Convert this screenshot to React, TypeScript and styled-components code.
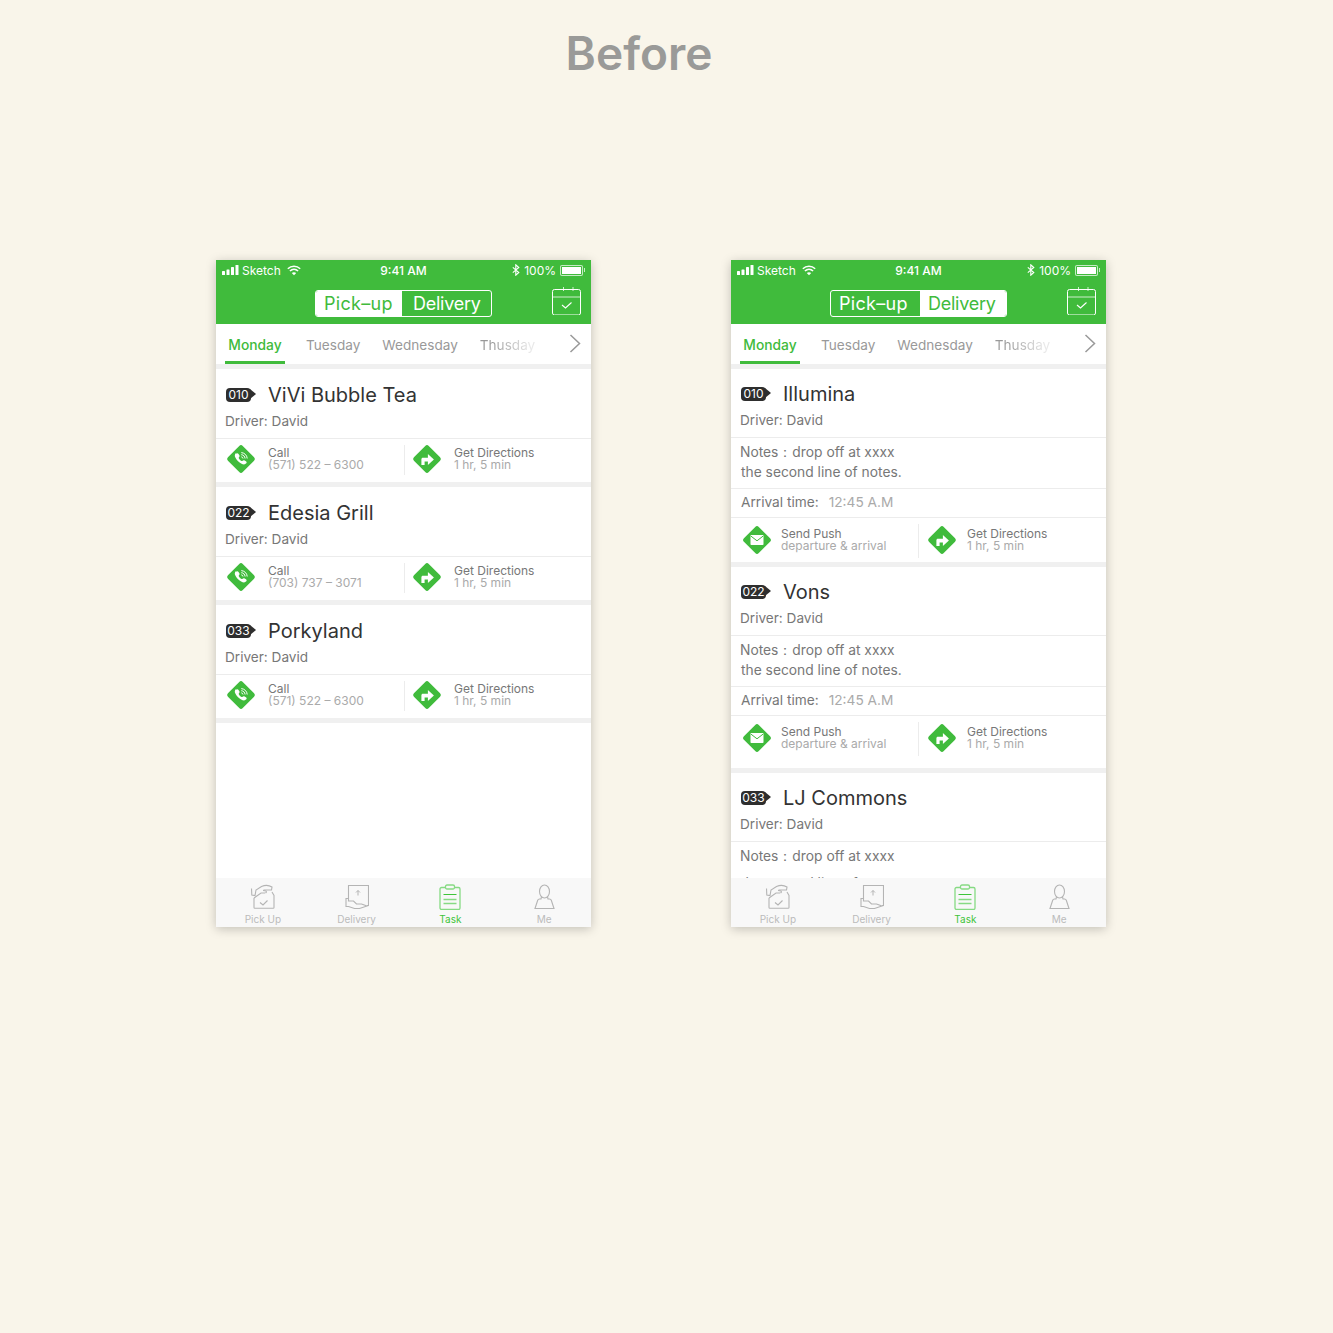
import React from 'react';
import styled, {createGlobalStyle} from 'styled-components';

type TaskType = {
    code: string
    name: string
    notes?: boolean
    cut?: boolean
    tall?: boolean
    phone?: string
}

const leftTasks: TaskType[] = [
    {code: '010', name: 'ViVi Bubble Tea', phone: '(571) 522 – 6300'},
    {code: '022', name: 'Edesia Grill', phone: '(703) 737 – 3071'},
    {code: '033', name: 'Porkyland', phone: '(571) 522 – 6300'},
]

const rightTasks: TaskType[] = [
    {code: '010', name: 'Illumina', notes: true},
    {code: '022', name: 'Vons', notes: true, tall: true},
    {code: '033', name: 'LJ Commons', notes: true, cut: true},
]

const GREEN = '#40bb3c'

const Diamond = ({children}: { children: React.ReactNode }) => (
    <svg width="30" height="30" viewBox="0 0 30 30">
        <rect x="4.500" y="4.500" width="21" height="21" rx="2.500" fill={GREEN} transform="rotate(45 15 15)"/>
        {children}
    </svg>
)

const CallIcon = () => (
    <Diamond>
        <path d="M10.200 9.800c.9-.9 1.700-.9 2.300.1l1 1.700c.3.600.1 1.100-.5 1.600-.4.300-.4.700-.1 1.200.7 1.100 1.400 1.800 2.500 2.500.5.300.9.300 1.200-.1.500-.6 1-.8 1.600-.5l1.700 1c1 .6 1 1.400.1 2.300-1.100 1.200-2.900 1-4.900-.1-2.600-1.500-4.300-3.300-5.600-5.700-1.100-1.900-1-3.400.7-5z" fill="#fff"/>
        <path d="M15.300 8.600c3.200.2 5.700 2.700 5.900 5.900M15.300 10.700c2 .1 3.600 1.700 3.800 3.800M15.300 12.800c.9.100 1.600.8 1.700 1.700" fill="none" stroke="#fff" strokeWidth="1"/>
    </Diamond>
)

const DirectionIcon = () => (
    <Diamond>
        <path d="M9.400 21v-5.800c0-.9.600-1.500 1.500-1.500h5v-3.700l6 5.500-6 5.500v-3.600h-3.300V21z" fill="#fff"/>
    </Diamond>
)

const MailIcon = () => (
    <Diamond>
        <rect x="8.500" y="10" width="13" height="10" rx=".8" fill="#fff"/>
        <path d="M8.800 11L15 15.800 21.200 11" fill="none" stroke={GREEN} strokeWidth="1"/>
    </Diamond>
)

const SignalIcon = () => (
    <svg width="17" height="10" viewBox="0 0 17 10">
        <rect x="0" y="6" width="3" height="4" rx=".6" fill="#fff"/>
        <rect x="4.500" y="4.500" width="3" height="5.500" rx=".6" fill="#fff"/>
        <rect x="9" y="2" width="3" height="8" rx=".6" fill="#fff"/>
        <rect x="13.500" y="0" width="3" height="10" rx=".6" fill="#fff"/>
    </svg>
)

const WifiIcon = () => (
    <svg width="14" height="11" viewBox="0 0 14 11">
        <path d="M.8 3.800C4.300.4 9.700.4 13.200 3.800M2.900 6C5.300 3.800 8.700 3.800 11.100 6" fill="none" stroke="#fff" strokeWidth="1.500"/>
        <path d="M4.800 7.900c1.300-1 3.100-1 4.400 0L7 10.300z" fill="#fff"/>
    </svg>
)

const BluetoothIcon = () => (
    <svg width="8" height="12" viewBox="0 0 8 12">
        <path d="M.8 3.300l6 5.200L3.800 11.200V.8l3 2.700-6 5.200" fill="none" stroke="#fff" strokeWidth="1.100"/>
    </svg>
)

const CalendarIcon = () => (
    <svg width="29" height="28" viewBox="0 0 29 28">
        <rect x=".5" y="2.500" width="28" height="25.500" rx="2" fill="none" stroke="#fff"/>
        <path d="M.5 10h28" stroke="#fff" opacity=".75"/>
        <path d="M11.500 0v4M21 0v4" stroke="#fff" opacity=".75"/>
        <path d="M10 18l3.500 3 6-5.500" fill="none" stroke="#fff" strokeWidth="1.100"/>
    </svg>
)

const ChevronIcon = () => (
    <svg width="12" height="19" viewBox="0 0 12 19">
        <path d="M1.500 1l9 8.500-9 8.500" fill="none" stroke="#999" strokeWidth="1.500"/>
    </svg>
)

const PickUpIcon = () => (
    <svg width="26" height="26" viewBox="0 0 26 26" fill="none" stroke="#b4b4b4" strokeWidth="1.100">
        <path d="M4 14v9.500c0 .5.300.8.800.8h18.400c.5 0 .8-.3.800-.8V11.500l-2-3.500"/>
        <path d="M4 14l7-5h4"/>
        <path d="M10 18.500l3 2.500 4.500-4.500"/>
        <path d="M1.500 4.500L1.800 11l3.200.5 1-5.500 5.500-3.500C15 1 19 1.200 22 3l-.5 3h-8"/>
        <path d="M13 6.500c3 0 4.500 1 2.500 2.500"/>
    </svg>
)

const DeliveryIcon = () => (
    <svg width="24" height="26" viewBox="0 0 24 26" fill="none" stroke="#b4b4b4" strokeWidth="1.100">
        <path d="M3.500 14.500V1.500h20v20h-1.500"/>
        <path d="M13 11.500V6.500M11 8.500l2-2 2 2" strokeWidth="1"/>
        <path d="M1 14.500v8h2.500l6 2h5l7.500-2.500-5.500-2h-5l-3-3H3.500v-2.500z"/>
    </svg>
)

const TaskIcon = () => (
    <svg width="22" height="26" viewBox="0 0 22 26" fill="none" stroke="#86da83" strokeWidth="1.300">
        <rect x="1" y="3.500" width="20" height="22" rx="1.500"/>
        <rect x="6.500" y="1" width="9" height="4" rx="1.500" fill="#f8f8f8"/>
        <path d="M4.500 10.500h13" stroke="#3fc43a" strokeWidth="1"/>
        <path d="M4.500 15.500h13M4.500 19.500h13" strokeWidth="1.400"/>
    </svg>
)

const MeIcon = () => (
    <svg width="21" height="26" viewBox="0 0 21 26" fill="none" stroke="#b4b4b4" strokeWidth="1.100">
        <ellipse cx="10.500" cy="7.500" rx="5" ry="6.500"/>
        <path d="M7.500 13l-.5 2H5.500c-1 0-1.500.5-1.800 1.300L1 24.500h19l-2.700-8.200c-.3-.8-.8-1.300-1.800-1.300H14l-.5-2"/>
    </svg>
)

const Action = ({icon, title, sub, second, dense}: {
    icon: React.ReactNode, title: string, sub: string, second?: boolean, dense?: boolean
}) => (
    <ActionCell $second={second} $dense={dense}>
        <IconSlot $dense={dense}>{icon}</IconSlot>
        <ActionText>
            <ActionTitle>{title}</ActionTitle>
            <ActionSub>{sub}</ActionSub>
        </ActionText>
    </ActionCell>
)

const Card = ({task, dense}: { task: TaskType, dense?: boolean }) => (
    <>
        <CardHead $dense={dense}>
            <TitleRow>
                <Tag>{task.code}</Tag>
                <Title>{task.name}</Title>
            </TitleRow>
            <Driver>Driver: David</Driver>
        </CardHead>
        {task.notes && (
            <Notes>
                <NoteLine>Notes：drop off at xxxx</NoteLine>
                <NoteLine $shift $cut={task.cut}>the second line of notes.</NoteLine>
            </Notes>
        )}
        {task.notes && !task.cut && (
            <Arrival>Arrival time:<ArrivalValue>12:45 A.M</ArrivalValue></Arrival>
        )}
        {!task.cut && (
            <Actions $tall={task.tall} $dense={dense}>
                {task.phone
                    ? <Action icon={<CallIcon/>} title="Call" sub={task.phone}/>
                    : <Action dense icon={<MailIcon/>} title="Send Push" sub="departure & arrival"/>}
                <Action second dense={dense} icon={<DirectionIcon/>} title="Get Directions" sub="1 hr, 5 min"/>
            </Actions>
        )}
        {!task.cut && <Gap/>}
    </>
)

const Phone = ({tasks, delivery, dense}: { tasks: TaskType[], delivery?: boolean, dense?: boolean }) => (
    <Screen>
        <Header>
            <StatusBar>
                <StatusSide>
                    <SignalIcon/>
                    <span>Sketch</span>
                    <WifiGap><WifiIcon/></WifiGap>
                </StatusSide>
                <StatusTime>9:41 AM</StatusTime>
                <StatusSide $right>
                    <BluetoothIcon/>
                    <span>100%</span>
                    <Battery/>
                </StatusSide>
            </StatusBar>
            <NavBar>
                <Segment>
                    <SegmentItem $active={!delivery} $width={delivery ? 89 : 86} $pad={8} $spacing={.3}>Pick–up</SegmentItem>
                    <SegmentItem $active={delivery} $width={delivery ? 86 : 89} $pad={delivery ? 8 : 11} $spacing={-.25}>Delivery</SegmentItem>
                </Segment>
                <CalendarSlot><CalendarIcon/></CalendarSlot>
            </NavBar>
        </Header>
        <Days>
            <Day $active>Monday</Day>
            <Day>Tuesday</Day>
            <Day>Wednesday</Day>
            <Day $fade>Thusday</Day>
            <ChevronSlot><ChevronIcon/></ChevronSlot>
        </Days>
        <Gap/>
        <Content>
            {tasks.map(t => <Card key={t.code} task={t} dense={dense}/>)}
        </Content>
        <TabBar>
            <TabItem><TabIcon><PickUpIcon/></TabIcon>Pick Up</TabItem>
            <TabItem><TabIcon><DeliveryIcon/></TabIcon>Delivery</TabItem>
            <TabItem $active><TabIcon><TaskIcon/></TabIcon>Task</TabItem>
            <TabItem><TabIcon><MeIcon/></TabIcon>Me</TabItem>
        </TabBar>
    </Screen>
)

export default function App() {
    return (
        <Page>
            <GlobalStyle/>
            <Heading>Before</Heading>
            <Phones>
                <Phone tasks={leftTasks}/>
                <Phone tasks={rightTasks} delivery dense/>
            </Phones>
        </Page>
    )
}

const GlobalStyle = createGlobalStyle`
  html, body {
    margin: 0;
    padding: 0;
    background: #f9f5ea;
  }

  * {
    box-sizing: border-box;
  }
`

const Page = styled.div`
  width: 1333px;
  height: 1333px;
  background: #f9f5ea;
  font-family: Inter, "Noto Sans", sans-serif;
  overflow: hidden;
`

const Heading = styled.h1`
  margin: 0;
  padding-top: 21px;
  height: 260px;
  padding-right: 55px;
  text-align: center;
  font-size: 46px;
  line-height: 64px;
  font-weight: 600;
  color: #9a9a98;
`

const Phones = styled.div`
  display: flex;
  gap: 140px;
  padding-left: 216px;
`

const Screen = styled.div`
  width: 375px;
  height: 667px;
  display: flex;
  flex-direction: column;
  background: #fff;
  box-shadow: 0 2px 10px rgba(0, 0, 0, .22);
`

const Header = styled.div`
  height: 64px;
  background: ${GREEN};
  color: #fff;
`

const StatusBar = styled.div`
  height: 20px;
  padding: 0 6px;
  display: grid;
  grid-template-columns: 1fr auto 1fr;
  align-items: center;
  font-size: 12px;
`

const StatusSide = styled.div<{ $right?: boolean }>`
  display: flex;
  align-items: center;
  gap: ${props => props.$right ? '4px' : '3px'};
  justify-content: ${props => props.$right ? 'flex-end' : 'flex-start'};
  padding-right: ${props => props.$right ? '2px' : '0'};
`

const WifiGap = styled.span`
  display: flex;
  margin-left: 3px;
`

const StatusTime = styled.div`
  font-weight: 500;
`

const Battery = styled.span`
  position: relative;
  width: 23px;
  height: 11px;
  border: 1px solid rgba(255, 255, 255, .7);
  border-radius: 2px;
  padding: 1px;
  background: #fff content-box;

  &::after {
    content: '';
    position: absolute;
    right: -3px;
    top: 2px;
    width: 1px;
    height: 4px;
    background: rgba(255, 255, 255, .7);
  }
`

const NavBar = styled.div`
  height: 44px;
  display: flex;
  align-items: center;
  padding: 3px 10px 0 99px;
  justify-content: space-between;
`

const Segment = styled.div`
  width: 177px;
  height: 27px;
  display: flex;
  border: 1px solid #fff;
  border-radius: 3px;
  overflow: hidden;
`

const SegmentItem = styled.div<{ $active?: boolean, $width: number, $pad: number, $spacing: number }>`
  width: ${props => props.$width}px;
  padding-left: ${props => props.$pad}px;
  font-size: 18px;
  line-height: 25px;
  letter-spacing: ${props => props.$spacing}px;
  white-space: nowrap;
  color: ${props => props.$active ? GREEN : '#fff'};
  background: ${props => props.$active ? '#fff' : 'transparent'};
`

const CalendarSlot = styled.div`
  display: flex;
  margin-top: -5px;
`

const Days = styled.div`
  height: 40px;
  display: flex;
  padding-left: 9px;
  position: relative;
`

const Day = styled.div<{ $active?: boolean, $fade?: boolean }>`
  width: ${props => props.$active ? '60px' : 'auto'};
  margin-right: ${props => props.$active ? '21px' : '22px'};
  text-align: center;
  font-size: ${props => props.$active ? '13.8px' : '13.6px'};
  line-height: 42px;
  color: ${props => props.$active ? GREEN : '#999'};
  font-weight: ${props => props.$active ? 500 : 400};
  border-bottom: 3px solid ${props => props.$active ? GREEN : 'transparent'};
  ${props => props.$fade && `
    background: linear-gradient(90deg, #999 20%, #e8e8e8 90%);
    -webkit-background-clip: text;
    background-clip: text;
    color: transparent;
  `}
`

const ChevronSlot = styled.div`
  position: absolute;
  right: 10px;
  top: 10px;
  display: flex;
`

const Gap = styled.div`
  height: 5px;
  flex: none;
  background: #f0f0f0;
`

const Content = styled.div`
  flex: 1;
  min-height: 0;
  overflow: hidden;
`

const CardHead = styled.div<{ $dense?: boolean }>`
  padding: ${props => props.$dense ? '13px' : '14px'} 9px 7px;
  border-bottom: 1px solid #ececec;
`

const TitleRow = styled.div`
  display: flex;
  align-items: center;
  height: 24px;
  padding-left: 1px;
`

const Tag = styled.span`
  position: relative;
  width: 25px;
  height: 14px;
  margin-right: 17px;
  margin-bottom: 1px;
  border-radius: 4px;
  background: #2e2e2e;
  color: #fff;
  font-size: 12px;
  line-height: 14px;
  text-align: center;

  &::after {
    content: '';
    position: absolute;
    left: 24px;
    top: 1.500px;
    border-left: 6px solid #2e2e2e;
    border-top: 5.500px solid transparent;
    border-bottom: 5.500px solid transparent;
  }
`

const Title = styled.div`
  font-size: 20px;
  line-height: 24px;
  color: #333;
`

const Driver = styled.div`
  margin-top: 4px;
  font-size: 13.6px;
  line-height: 20px;
  color: #777;
`

const Notes = styled.div`
  padding: 4px 9px 6px;
  border-bottom: 1px solid #ececec;
`

const NoteLine = styled.div<{ $shift?: boolean, $cut?: boolean }>`
  font-size: 13.8px;
  line-height: 20px;
  color: #777;
  margin-left: ${props => props.$shift ? '1px' : '0'};
  margin-top: ${props => props.$cut ? '7px' : '0'};
`

const Arrival = styled.div`
  height: 29px;
  padding-left: 10px;
  border-bottom: 1px solid #ececec;
  font-size: 13.7px;
  line-height: 27px;
  color: #777;
`

const ArrivalValue = styled.span`
  margin-left: 10px;
  color: #aaa;
`

const Actions = styled.div<{ $tall?: boolean, $dense?: boolean }>`
  height: ${props => props.$tall ? '52px' : props.$dense ? '44px' : '43px'};
  padding-bottom: ${props => props.$tall ? '8px' : props.$dense ? '0' : '3px'};
  display: flex;
`

const ActionCell = styled.div<{ $second?: boolean, $dense?: boolean }>`
  display: flex;
  align-items: center;
  width: ${props => props.$second ? 'auto' : props.$dense ? '187px' : '188px'};
  flex: ${props => props.$second ? 1 : 'none'};
  position: relative;

  ${props => props.$second && `
    &::before {
      content: '';
      position: absolute;
      left: 0;
      top: 6px;
      bottom: 4px;
      width: 1px;
      background: #ececec;
    }
  `}
`

const IconSlot = styled.div<{ $dense?: boolean }>`
  display: flex;
  margin-left: ${props => props.$dense ? '11px' : '10px'};
  margin-right: ${props => props.$dense ? '9px' : '12px'};

  ${ActionCell}:last-child & {
    margin-left: ${props => props.$dense ? '9px' : '8px'};
    margin-right: ${props => props.$dense ? '10px' : '12px'};
  }
`

const ActionText = styled.div`
  display: flex;
  flex-direction: column;
`

const ActionTitle = styled.div`
  font-size: 12px;
  line-height: 12px;
  color: #777;
`

const ActionSub = styled.div`
  font-size: 12px;
  line-height: 12px;
  color: #aaa;
`

const TabBar = styled.div`
  height: 49px;
  flex: none;
  display: grid;
  grid-template-columns: repeat(4, 1fr);
  background: #f8f8f8;
`

const TabItem = styled.div<{ $active?: boolean }>`
  display: flex;
  flex-direction: column;
  align-items: center;
  font-size: 10px;
  line-height: 12px;
  padding-top: 6px;
  color: ${props => props.$active ? '#3fc43a' : '#bbb'};
`

const TabIcon = styled.div`
  height: 26px;
  margin-bottom: 3px;
  display: flex;
`
